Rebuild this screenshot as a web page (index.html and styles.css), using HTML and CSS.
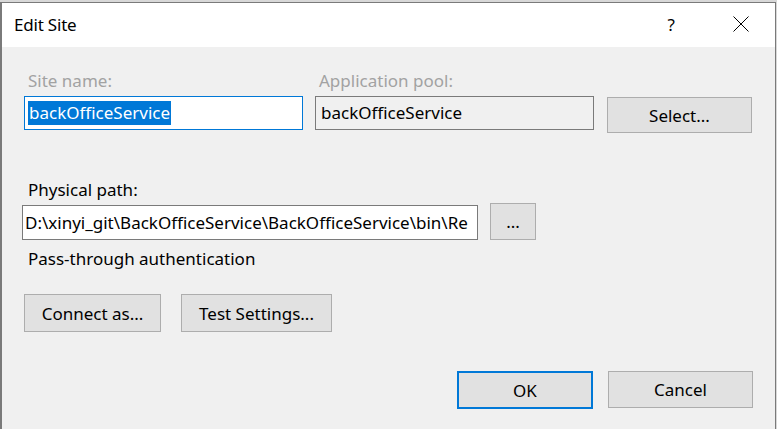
FILE: index.html
```html
<!DOCTYPE html>
<html>
<head>
<meta charset="utf-8">
<link rel="stylesheet" href="styles.css">
</head>
<body>
<div class="window">
  <div class="titlebar">
    <span class="title">Edit Site</span>
    <div class="caption-btns">
      <span class="help">?</span>
      <svg class="close" width="16" height="16" viewBox="0 0 16 16"><path d="M0.5 0.5 L15.5 15.5 M15.5 0.5 L0.5 15.5" stroke="#000" stroke-width="1" fill="none"/></svg>
    </div>
  </div>
  <div class="content">
    <div class="row-top">
      <div class="field site">
        <div class="label disabled">Site name:</div>
        <div class="input focused"><span class="sel">backOfficeService</span></div>
      </div>
      <div class="field pool">
        <div class="label disabled">Application pool:</div>
        <div class="input readonly">backOfficeService</div>
      </div>
      <button class="btn select">Select...</button>
    </div>
    <div class="label phys">Physical path:</div>
    <div class="row-path">
      <div class="input path">D:\xinyi_git\BackOfficeService\BackOfficeService\bin\Re</div>
      <button class="btn dots">...</button>
    </div>
    <div class="label pass">Pass-through authentication</div>
    <div class="row-connect">
      <button class="btn connect">Connect as...</button>
      <button class="btn test">Test Settings...</button>
    </div>
    <div class="row-footer">
      <button class="btn ok">OK</button>
      <button class="btn cancel">Cancel</button>
    </div>
  </div>
</div>
</body>
</html>
```
FILE: styles.css
```css
html, body {
  margin: 0;
  padding: 0;
  background: #d8d8d8;
  width: 777px;
  height: 429px;
  overflow: hidden;
}
body {
  font-family: "Noto Sans", "Open Sans", sans-serif;
  font-size: 17px;
  color: #000;
}
.window {
  margin-top: 2px;
  width: 776px;
  height: 427px;
  box-sizing: border-box;
  border: 1px solid #7a7a7a;
  border-left-width: 2px;
  border-bottom: none;
  background: #f0f0f0;
  display: flex;
  flex-direction: column;
}
.titlebar {
  height: 44px;
  background: #fff;
  display: flex;
  align-items: center;
  justify-content: space-between;
  padding-left: 12px;
  flex: none;
}
.title {
  font-size: 17px;
  letter-spacing: -0.2px;
  margin-top: -2px;
}
.caption-btns {
  display: flex;
  align-items: center;
  margin-top: -2px;
}
.help {
  font-size: 17px;
  margin-right: 58px;
}
.close {
  margin-right: 26px;
  display: block;
}
.content {
  padding: 23px 0 0 20px;
  display: flex;
  flex-direction: column;
}
.label {
  line-height: 22px;
  height: 22px;
  white-space: nowrap;
}
.disabled { color: #a2a2a2; }
.row-top {
  display: flex;
  align-items: flex-start;
}
.field .label { padding-left: 4px; }
.site { width: 279px; margin-left: 2px; }
.pool { width: 279px; margin-left: 12px; }
.input {
  box-sizing: border-box;
  height: 34px;
  border: 1px solid #7a7a7a;
  background: #fff;
  padding: 0 3px;
  line-height: 32px;
  white-space: nowrap;
  overflow: hidden;
  margin-top: 4px;
}
.focused { border-color: #0078d7; }
.readonly { background: #f0f0f0; padding-left: 5px; }
.sel {
  background: #0078d7;
  color: #fff;
  display: inline-block;
  line-height: 24px;
  padding: 0 1px 0 1px;
}
.btn {
  font-family: inherit;
  font-size: 17px;
  color: #000;
  background: #e1e1e1;
  border: 1px solid #adadad;
  box-sizing: border-box;
  padding: 0;
  margin: 0;
}
.select {
  width: 145px;
  height: 36px;
  margin-left: 13px;
  margin-top: 27px;
}
.phys { margin-top: 46px; padding-left: 6px; }
.row-path {
  display: flex;
  align-items: flex-start;
  margin-top: 2px;
}
.path {
  width: 456px;
  height: 35px;
  margin-top: 2px;
  padding-left: 2px;
  line-height: 33px;
}
.dots {
  width: 46px;
  height: 37px;
  margin-left: 12px;
  line-height: 30px;
}
.pass { margin-top: 8px; padding-left: 6px; }
.row-connect {
  display: flex;
  margin-top: 24px;
  gap: 20px;
  padding-left: 2px;
}
.connect { width: 137px; height: 38px; }
.test { width: 151px; height: 38px; }
.row-footer {
  display: flex;
  margin-top: 39px;
  padding-left: 435px;
  gap: 15px;
}
.ok {
  width: 136px;
  height: 38px;
  border: 2px solid #0078d7;
}
.cancel { width: 145px; height: 37px; }
```
